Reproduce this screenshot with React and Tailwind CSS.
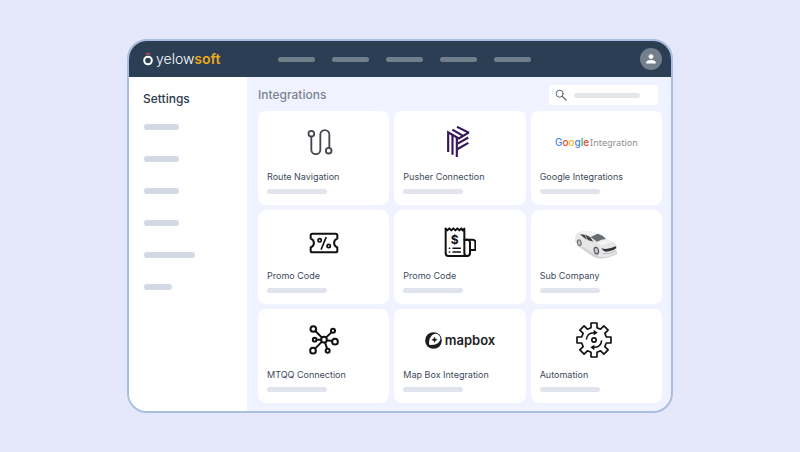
const NAV_ITEMS = ['Dashboard', 'Dispatch', 'Drivers', 'Reports', 'Billing'];

const SIDE_ITEMS = [
  { label: 'General', width: 'w-[35px]' },
  { label: 'Company', width: 'w-[35px]' },
  { label: 'Vehicles', width: 'w-[35px]' },
  { label: 'Pricing', width: 'w-[35px]' },
  { label: 'Notifications', width: 'w-[51px]' },
  { label: 'Users', width: 'w-7' },
];

function RouteIcon() {
  return (
    <svg width="34" height="26" viewBox="169 130 102 78" fill="none" stroke="#45474f" strokeWidth="5.500">
      <circle cx="182" cy="144" r="8.5" />
      <circle cx="234" cy="195" r="8.5" />
      <path d="M182 153v39a13.500 13.500 0 0 0 27 0v-45a13.500 13.500 0 0 1 27 0v40" />
    </svg>
  );
}

function PusherIcon() {
  return (
    <svg width="30" height="32" viewBox="165 65 90 96" fill="none" stroke="#37165a" strokeWidth="6.500">
      <path d="M174.500 143V84l32 18.500 28-16.500V84L201 67.500" />
      <path d="M187.500 151V92M200.500 158V98M187 76l31 18" />
      <path d="M203 118l32-18.500M203 134l32-18.500" />
    </svg>
  );
}

function GoogleMark() {
  return (
    <div className="flex items-baseline gap-px text-[10px] leading-4">
      <span className="font-['Inter',sans-serif] font-medium">
        <span className="text-[#4285f4]">G</span>
        <span className="text-[#ea4335]">o</span>
        <span className="text-[#fbbc05]">o</span>
        <span className="text-[#4285f4]">g</span>
        <span className="text-[#34a853]">l</span>
        <span className="text-[#ea4335]">e</span>
      </span>
      <span className="font-['Noto_Sans',sans-serif] text-[9px] text-[#8d8d8d]">Integration</span>
    </div>
  );
}

function PromoIcon() {
  return (
    <svg width="30" height="26" viewBox="57 40 90 78" fill="none" stroke="#111" strokeWidth="6" strokeLinejoin="round" strokeLinecap="round">
      <path d="M67 57h70q5 0 5 5v10c-13 4-13 22 0 26v10q0 5-5 5H67q-5 0-5-5V98c13-4 13-22 0-26V62q0-5 5-5Z" />
      <circle cx="89" cy="77" r="5" strokeWidth="5" />
      <circle cx="116" cy="94" r="5" strokeWidth="5" />
      <path d="M108 69l-14 34" strokeWidth="5" />
    </svg>
  );
}

function ReceiptIcon() {
  return (
    <svg width="32" height="32" viewBox="59 31 96 96" fill="none" stroke="#111" strokeWidth="6" strokeLinejoin="round" strokeLinecap="round">
      <path d="M64 42v74q0 8 8 8h56q9 0 9-9V83q0-8-8-8h-9" />
      <path d="M64 42l5 5 6-6 6 6 6-6 6 6 6-6 6 6 6-6 4 6 5-5v73q0 9 8 9" />
      <path d="M124 75h21q8 0 8 8v23h-15" />
      <path d="M75 101h1M75 112h1M86 101h22M86 112h22" strokeWidth="4.500" />
      <text x="91" y="88" textAnchor="middle" className="font-['Inter',sans-serif] text-[36px] font-bold" fill="#111" stroke="none">$</text>
    </svg>
  );
}

function CarIcon() {
  return (
    <svg width="44" height="38" viewBox="42 26 132 114">
      <path d="M47 94l56 38q16 8 45 0l24-10-4-14-60-20Z" fill="#d2d2d2" />
      <path d="M46 68q2-7 13-12 14-5 29-2l24 6q16 4 25 17l22 9q12 6 12 17l-3 15q-9 7-26 12-17 5-28-3L59 95q-13-4-14-14Z" fill="#e6e6e6" />
      <path d="M59 56q14-5 29-2l24 6-15 8-36-7Z" fill="#f3f3f3" />
      <path d="M92 71l21-10q15 4 25 16-15 1-27 8Z" fill="#686c70" />
      <path d="M60 63q18-1 31 9l9 13-15-4q-15-7-25-18Z" fill="#42464b" />
      <path d="M75 64l7 16" stroke="#dcdcdc" strokeWidth="2" />
      <path d="M112 88q13-6 25-8l20 8q-19 1-31 10Z" fill="#f4f4f4" />
      <path d="M124 105q18 6 43-6l2 5q-12 10-32 11-10-3-13-10Z" fill="#2e3236" />
      <path d="M129 121q21 3 38-9" stroke="#b9b9b9" strokeWidth="3" fill="none" />
      <ellipse cx="58" cy="88" rx="7" ry="10" fill="#606469" transform="rotate(-15 58 88)" />
      <ellipse cx="58" cy="88" rx="4" ry="7" fill="#c5c6c8" transform="rotate(-15 58 88)" />
      <ellipse cx="109" cy="112" rx="8" ry="12" fill="#55595e" transform="rotate(-15 109 112)" />
      <ellipse cx="109" cy="112" rx="5" ry="8" fill="#c5c6c8" transform="rotate(-15 109 112)" />
    </svg>
  );
}

function HubIcon() {
  return (
    <svg width="30" height="30" viewBox="56 38 90 90" fill="none" stroke="#111" strokeWidth="6">
      <circle cx="101" cy="82" r="8.500" />
      <circle cx="69" cy="50" r="8.500" />
      <circle cx="128" cy="55" r="6" />
      <circle cx="73" cy="82" r="5.500" />
      <circle cx="134" cy="88" r="8.500" />
      <circle cx="68" cy="115" r="8.500" />
      <circle cx="112" cy="115" r="6" />
      <path d="M75 56l20 20M107 76l16-16M79 82h13M110 84l15 2M95 88l-21 21M104 90l6 18" />
    </svg>
  );
}

function MapboxMark() {
  return (
    <div className="flex items-center gap-[3px]">
      <svg width="17" height="17" viewBox="40.500 62.500 51 51">
        <circle cx="66" cy="88" r="25" fill="#1d1d1f" />
        <path d="M53 101Q51 85 58 77A15 15 0 1 1 79 96Q70 103 53 101Z" fill="#fff" />
        <path d="M69 77l3 6 6 3-6 3-3 6-3-6-6-3 6-3Z" fill="#1d1d1f" />
      </svg>
      <span className="text-[13px] leading-4 font-semibold text-[#1d1d1f]">mapbox</span>
    </div>
  );
}

function GearIcon() {
  return (
    <svg width="42" height="38" viewBox="-57 -57 126 114" fill="none" stroke="#111" strokeWidth="5" strokeLinejoin="round">
      <path d="M-9-37V-51H9V-37L19.800-32.500 29.700-42.400 42.400-29.700 32.500-19.800 37-9H51V9H37L32.500 19.800 42.400 29.700 29.700 42.400 19.800 32.500 9 37V51H-9V37L-19.800 32.500-29.700 42.400-42.400 29.700-32.500 19.800-37 9H-51V-9H-37L-32.500-19.800-42.400-29.700-29.700-42.400-19.800-32.500Z" />
      <circle r="6.500" />
      <path d="M-23-1Q-21-22 0-22M23 1Q21 22 0 22" strokeWidth="4.500" />
      <path d="M-1-31L11-22-1-14ZM1 31L-11 22 1 14Z" fill="#111" stroke="none" />
    </svg>
  );
}

function SearchIcon() {
  return (
    <svg width="12" height="12" viewBox="0 0 12 12" fill="none" stroke="#5f6570" strokeLinecap="round">
      <circle cx="4.700" cy="4.700" r="3.500" />
      <path d="M7.300 7.300L11 11" strokeWidth="1.200" />
    </svg>
  );
}

const CARDS = [
  { title: 'Route Navigation', icon: <RouteIcon /> },
  { title: 'Pusher Connection', icon: <PusherIcon /> },
  { title: 'Google Integrations', icon: <GoogleMark /> },
  { title: 'Promo Code', icon: <PromoIcon /> },
  { title: 'Promo Code', icon: <ReceiptIcon /> },
  { title: 'Sub Company', icon: <CarIcon /> },
  { title: 'MTQQ Connection', icon: <HubIcon /> },
  { title: 'Map Box Integration', icon: <MapboxMark /> },
  { title: 'Automation', icon: <GearIcon /> },
];

function Logo() {
  return (
    <a href="#" className="flex items-center gap-[3px] text-[14px] leading-4" aria-label="yelowsoft home">
      <svg width="10" height="14" viewBox="0 0 10 14" fill="none">
        <circle cx="5" cy="8.500" r="3.800" stroke="#fff" strokeWidth="2" />
        <path d="M3 2.500q2-2 4 0" stroke="#c94b45" strokeWidth="1.300" />
      </svg>
      <span className="font-light text-white">
        yelow<span className="font-semibold text-[#eba91c]">soft</span>
      </span>
    </a>
  );
}

function TopBar() {
  return (
    <header className="flex h-9 items-center bg-[#2c3e53] pr-[9px] pl-3.5">
      <div className="w-[135px]">
        <Logo />
      </div>
      <nav className="flex flex-1 gap-[17px]" aria-label="Main">
        {NAV_ITEMS.map((item) => (
          <a key={item} href="#" aria-label={item} className="h-[5px] w-[37px] rounded-full bg-[#717f8d]" />
        ))}
      </nav>
      <button aria-label="Account" className="grid size-[22px] place-items-center rounded-full bg-[#737f8c]">
        <svg width="10" height="10" viewBox="0 0 10 10" fill="#fff">
          <circle cx="5" cy="2.600" r="2.400" />
          <path d="M0.300 9.500V8.500Q0.300 6 5 6T9.700 8.500V9.500Z" />
        </svg>
      </button>
    </header>
  );
}

function Sidebar() {
  return (
    <aside className="w-[118px] bg-white pt-3.5 pl-3.5">
      <h1 className="text-[12px] leading-4 font-medium text-[#2c3a4d]">Settings</h1>
      <nav className="mt-[17px] flex flex-col gap-[26px] pl-px" aria-label="Settings">
        {SIDE_ITEMS.map((item) => (
          <a
            key={item.label}
            href="#"
            aria-label={item.label}
            className={`h-1.5 rounded-full bg-[#d3d8e5] ${item.width}`}
          />
        ))}
      </nav>
    </aside>
  );
}

function Card({ title, icon }) {
  return (
    <li className="rounded-lg bg-white pb-[11px]">
      <div className="grid h-[60px] place-items-center pt-0.5">{icon}</div>
      <h3 className="pl-[9px] text-[9px] leading-3 whitespace-nowrap text-[#3d4a5a]">{title}</h3>
      <div className="mt-1.5 ml-[9px] h-[5px] w-[60px] rounded-full bg-[#e2e4ed]" />
    </li>
  );
}

export default function App() {
  return (
    <div className="min-h-screen bg-[#e5e8fa] px-[127px] py-[39px] font-['Inter',sans-serif]">
      <div className="overflow-hidden rounded-[20px] border-2 border-[#a9bfe2] bg-[#f0f3ff]">
        <TopBar />
        <div className="flex">
          <Sidebar />
          <main className="flex-1 pt-2 pr-[9px] pb-2 pl-[11px]">
            <div className="flex h-5 items-center justify-between pr-1">
              <h2 className="text-[12px] leading-4 font-medium text-[#7b8392]">Integrations</h2>
              <label className="flex h-5 w-[109px] items-center gap-[7px] rounded-[3px] bg-white pl-1.5">
                <SearchIcon />
                <input
                  type="search"
                  aria-label="Search integrations"
                  className="h-[5px] w-[66px] rounded-full bg-[#e4e7ea] text-[9px] outline-none"
                />
              </label>
            </div>
            <ul className="mt-1.5 grid grid-cols-3 gap-[5px]">
              {CARDS.map((card, i) => (
                <Card key={i} title={card.title} icon={card.icon} />
              ))}
            </ul>
          </main>
        </div>
      </div>
    </div>
  );
}
